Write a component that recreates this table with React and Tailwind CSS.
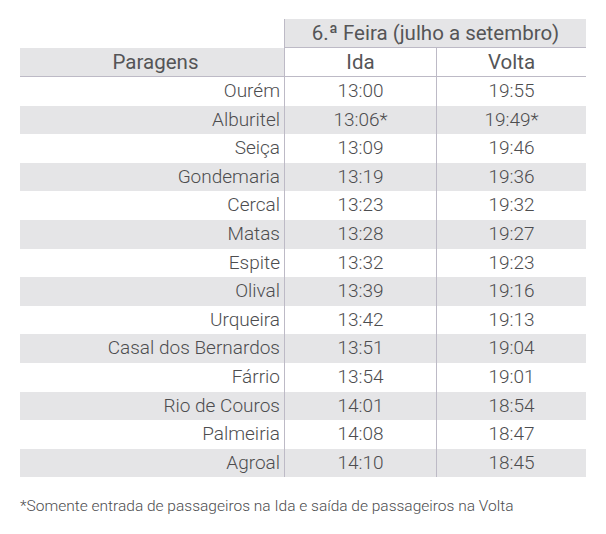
import React from 'react';

const rows = [
  ['Ourém', '13:00', '19:55'],
  ['Alburitel', '13:06*', '19:49*'],
  ['Seiça', '13:09', '19:46'],
  ['Gondemaria', '13:19', '19:36'],
  ['Cercal', '13:23', '19:32'],
  ['Matas', '13:28', '19:27'],
  ['Espite', '13:32', '19:23'],
  ['Olival', '13:39', '19:16'],
  ['Urqueira', '13:42', '19:13'],
  ['Casal dos Bernardos', '13:51', '19:04'],
  ['Fárrio', '13:54', '19:01'],
  ['Rio de Couros', '14:01', '18:54'],
  ['Palmeiria', '14:08', '18:47'],
  ['Agroal', '14:10', '18:45'],
];

export default function App() {
  return (
    <div
      className="w-[606px] h-[534px] bg-white text-[#4d4d4f] pt-[19px] px-[20px]"
      style={{ fontFamily: 'Roboto, "Liberation Sans", sans-serif' }}
    >
      <div className="w-[566px]">
        {/* header: day */}
        <div className="flex h-[29px] text-[#555557]">
          <div className="w-[264px]" />
          <div className="flex-1 bg-[#e5e5e7] border-l border-[#bdbac6] border-b flex items-center justify-center text-[20.5px]">
            6.ª Feira (julho a setembro)
          </div>
        </div>

        {/* header: columns */}
        <div className="flex h-[29px] border-b border-[#bdbac6] text-[20.5px] text-[#555557]">
          <div className="w-[264px] bg-[#e5e5e7] flex items-center justify-center pl-[7px]">Paragens</div>
          <div className="w-[152px] border-l border-[#bdbac6] flex items-center justify-center">Ida</div>
          <div className="flex-1 border-l border-[#bdbac6] flex items-center justify-center">Volta</div>
        </div>

        {rows.map(([stop, ida, volta], i) => (
          <div
            key={stop}
            className={`flex h-[28.6px] text-[19px] font-light ${i % 2 === 1 ? 'bg-[#e5e5e7]' : 'bg-white'}`}
          >
            <div className="w-[264px] flex items-center justify-end pr-[4px]">{stop}</div>
            <div className="w-[152px] border-l border-[#bdbac6] flex items-center justify-center">{ida}</div>
            <div className="flex-1 border-l border-[#bdbac6] flex items-center justify-center">{volta}</div>
          </div>
        ))}
      </div>

      <p className="mt-[18px] text-[15.5px] font-light">
        *Somente entrada de passageiros na Ida e saída de passageiros na Volta
      </p>
    </div>
  );
}
